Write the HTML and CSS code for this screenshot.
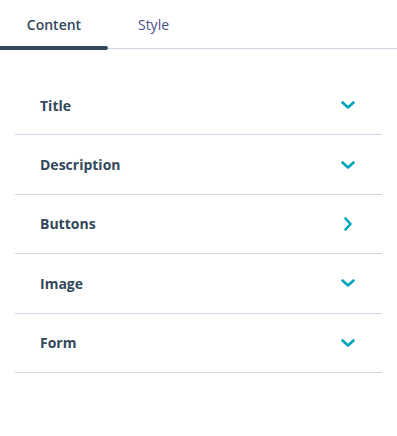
FILE: index.html
```html
<!DOCTYPE html>
<html lang="en">
<head>
    <meta charset="UTF-8">
    <title>Module editor</title>
    <link rel="stylesheet" href="styles.css">
</head>
<body>
    <div class="panel">
        <div class="tabs">
            <div class="tab active">Content</div>
            <div class="tab style-tab">Style</div>
        </div>

        <ul class="sections">
            <li class="section">
                <span>Title</span>
                <svg class="chevron" viewBox="0 0 16 16"><path d="M2.5 5.5 L8 10.5 L13.5 5.5"/></svg>
            </li>
            <li class="section">
                <span>Description</span>
                <svg class="chevron" viewBox="0 0 16 16"><path d="M2.5 5.5 L8 10.5 L13.5 5.5"/></svg>
            </li>
            <li class="section">
                <span>Buttons</span>
                <svg class="chevron" viewBox="0 0 16 16"><path d="M5.5 2.5 L10.5 8 L5.5 13.5"/></svg>
            </li>
            <li class="section">
                <span>Image</span>
                <svg class="chevron" viewBox="0 0 16 16"><path d="M2.5 5.5 L8 10.5 L13.5 5.5"/></svg>
            </li>
            <li class="section">
                <span>Form</span>
                <svg class="chevron" viewBox="0 0 16 16"><path d="M2.5 5.5 L8 10.5 L13.5 5.5"/></svg>
            </li>
        </ul>
    </div>
</body>
</html>
```

FILE: styles.css
```css
* {
    margin: 0;
    padding: 0;
    box-sizing: border-box;
    font-family: "Open Sans", "Liberation Sans", sans-serif;
}

body {
    background: #ffffff;
    color: #33475b;
}

.tabs {
    display: flex;
    height: 49px;
    border-bottom: 1px solid #cbd6e2;
}

.tab {
    position: relative;
    display: flex;
    align-items: center;
    justify-content: center;
    height: 48px;
    font-size: 14px;
    color: #33475b;
}

.tab.active {
    width: 108px;
    font-weight: 600;
}

.tab.active::after {
    content: "";
    position: absolute;
    left: 0;
    right: 0;
    bottom: -2px;
    height: 4px;
    border-radius: 0 2px 2px 0;
    background: #33475b;
}

.style-tab {
    width: 91px;
    color: #4f4f8a;
}

.sections {
    list-style: none;
    margin: 27px 15px 0 15px;
}

.section {
    display: flex;
    align-items: center;
    justify-content: space-between;
    height: 59.4px;
    padding: 0 26px 0 25px;
    border-bottom: 1px solid #cbd6e2;
    font-size: 14px;
    font-weight: 700;
    color: #33475b;
}

.chevron {
    width: 16px;
    height: 16px;
    fill: none;
    stroke: #00a4bd;
    stroke-width: 2.6;
    stroke-linecap: round;
    stroke-linejoin: round;
}
```
